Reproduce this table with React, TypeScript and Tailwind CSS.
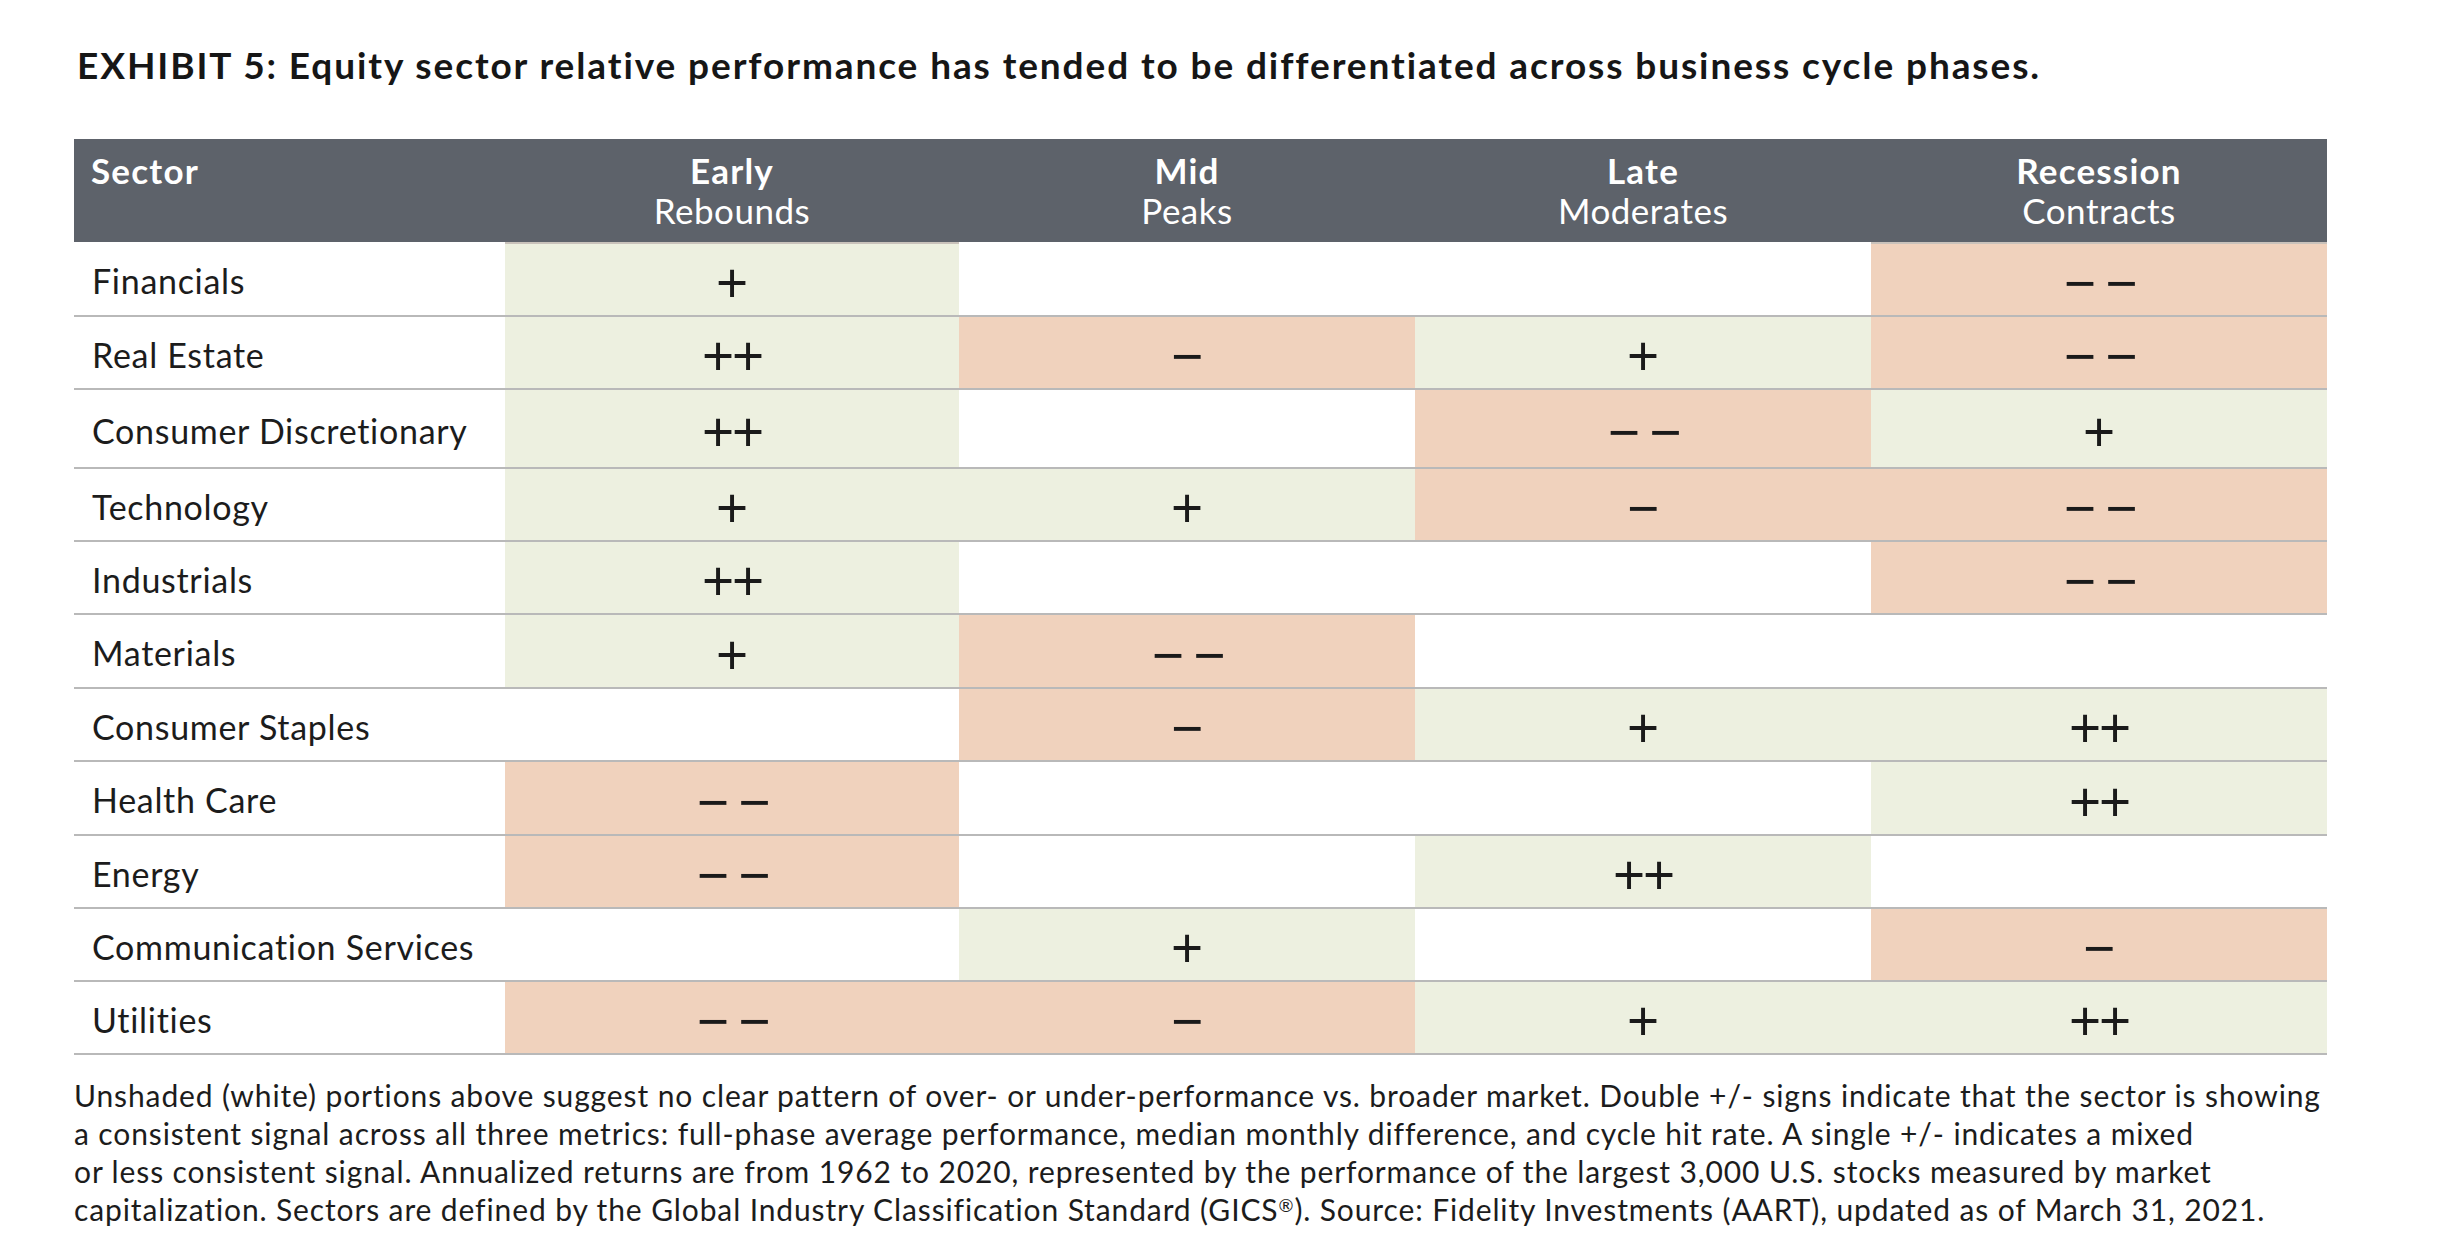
// Exhibit 5: equity sector relative performance across business cycle phases.

type Mark = "" | "+" | "++" | "-" | "--";

type SectorRow = {
  sector: string;
  height: string;
  cells: [Mark, Mark, Mark, Mark];
};

const PHASES = [
  { name: "Early", trend: "Rebounds" },
  { name: "Mid", trend: "Peaks" },
  { name: "Late", trend: "Moderates" },
  { name: "Recession", trend: "Contracts" },
];

// row heights include the 2px rule at the bottom
const ROWS: SectorRow[] = [
  { sector: "Financials", height: "h-[75px]", cells: ["+", "", "", "--"] },
  { sector: "Real Estate", height: "h-[73px]", cells: ["++", "-", "+", "--"] },
  { sector: "Consumer Discretionary", height: "h-[79px]", cells: ["++", "", "--", "+"] },
  { sector: "Technology", height: "h-[73px]", cells: ["+", "+", "-", "--"] },
  { sector: "Industrials", height: "h-[73px]", cells: ["++", "", "", "--"] },
  { sector: "Materials", height: "h-[74px]", cells: ["+", "--", "", ""] },
  { sector: "Consumer Staples", height: "h-[73px]", cells: ["", "-", "+", "++"] },
  { sector: "Health Care", height: "h-[74px]", cells: ["--", "", "", "++"] },
  { sector: "Energy", height: "h-[73px]", cells: ["--", "", "++", ""] },
  { sector: "Communication Services", height: "h-[73px]", cells: ["", "+", "", "-"] },
  { sector: "Utilities", height: "h-[73px]", cells: ["--", "-", "+", "++"] },
];

const COLS = "grid grid-cols-[431px_454px_456px_456px_456px]";

function cellTone(mark: Mark) {
  if (mark === "+" || mark === "++") return "bg-[#edf0e0]";
  if (mark === "-" || mark === "--") return "bg-[#f0d2bd]";
  return "bg-white";
}

function Sign({ mark }: { mark: Mark }) {
  if (!mark) return null;
  const text =
    mark === "+" ? "+" : mark === "++" ? "++" : mark === "-" ? "\u2212" : "\u2212 \u2212";
  return (
    <span
      className={`font-['Liberation_Sans',Arial,sans-serif] text-[55px] leading-none text-[#1a1a1a] ${
        mark === "++" ? "tracking-[-2px]" : mark === "--" ? "tracking-[-3px]" : ""
      }`}
    >
      {text}
    </span>
  );
}

export default function App() {
  return (
    <div className="w-[2442px] h-[1260px] bg-white pl-[74px] pt-[46px] font-['Lato','Liberation_Sans',sans-serif] text-[#1c1c1c]">
      <h1 className="text-[37px] leading-none font-bold tracking-[1.9px] text-[#161616] pl-[3px]">
        EXHIBIT 5: Equity sector relative performance has tended to be differentiated across business
        cycle phases.
      </h1>

      <div className="w-[2253px] mt-[56px]">
        {/* header band */}
        <div className={`${COLS} h-[103px] bg-[#5d626a] text-white text-[35px] leading-[40px]`}>
          <div className="pl-[17px] pt-[11px] font-bold tracking-[1.2px]">Sector</div>
          {PHASES.map((p) => (
            <div key={p.name} className="pt-[11px] text-center">
              <div className="font-bold tracking-[1.2px]">{p.name}</div>
              <div className="tracking-[0.5px]">{p.trend}</div>
            </div>
          ))}
        </div>

        {ROWS.map((row, i) => (
          <div
            key={row.sector}
            className={`${COLS} ${row.height} border-b-2 border-[#b9b9b9] text-[34px]`}
          >
            <div className="flex items-center pl-[18px] pt-[4px] leading-none tracking-[0.7px]">
              {row.sector}
            </div>
            {row.cells.map((mark, j) => (
              <div
                key={j}
                className={`flex items-center justify-center pt-[8px] ${cellTone(mark)} ${
                  i === 0 && mark ? "border-t-2 border-[#c9c2bb]" : ""
                }`}
              >
                <Sign mark={mark} />
              </div>
            ))}
          </div>
        ))}
      </div>

      <p className="mt-[21px] text-[30px] leading-[38px] tracking-[0.88px] whitespace-nowrap text-[#1c1c1c]">
        Unshaded (white) portions above suggest no clear pattern of over- or under-performance vs.
        broader market. Double +/- signs indicate that the sector is showing
        <br />
        a consistent signal across all three metrics: full-phase average performance, median monthly
        difference, and cycle hit rate. A single +/- indicates a mixed
        <br />
        or less consistent signal. Annualized returns are from 1962 to 2020, represented by the
        performance of the largest 3,000 U.S. stocks measured by market
        <br />
        capitalization. Sectors are defined by the Global Industry Classification Standard (GICS
        <sup className="text-[18px]">®</sup>). Source: Fidelity Investments (AART), updated as of
        March 31, 2021.
      </p>
    </div>
  );
}
